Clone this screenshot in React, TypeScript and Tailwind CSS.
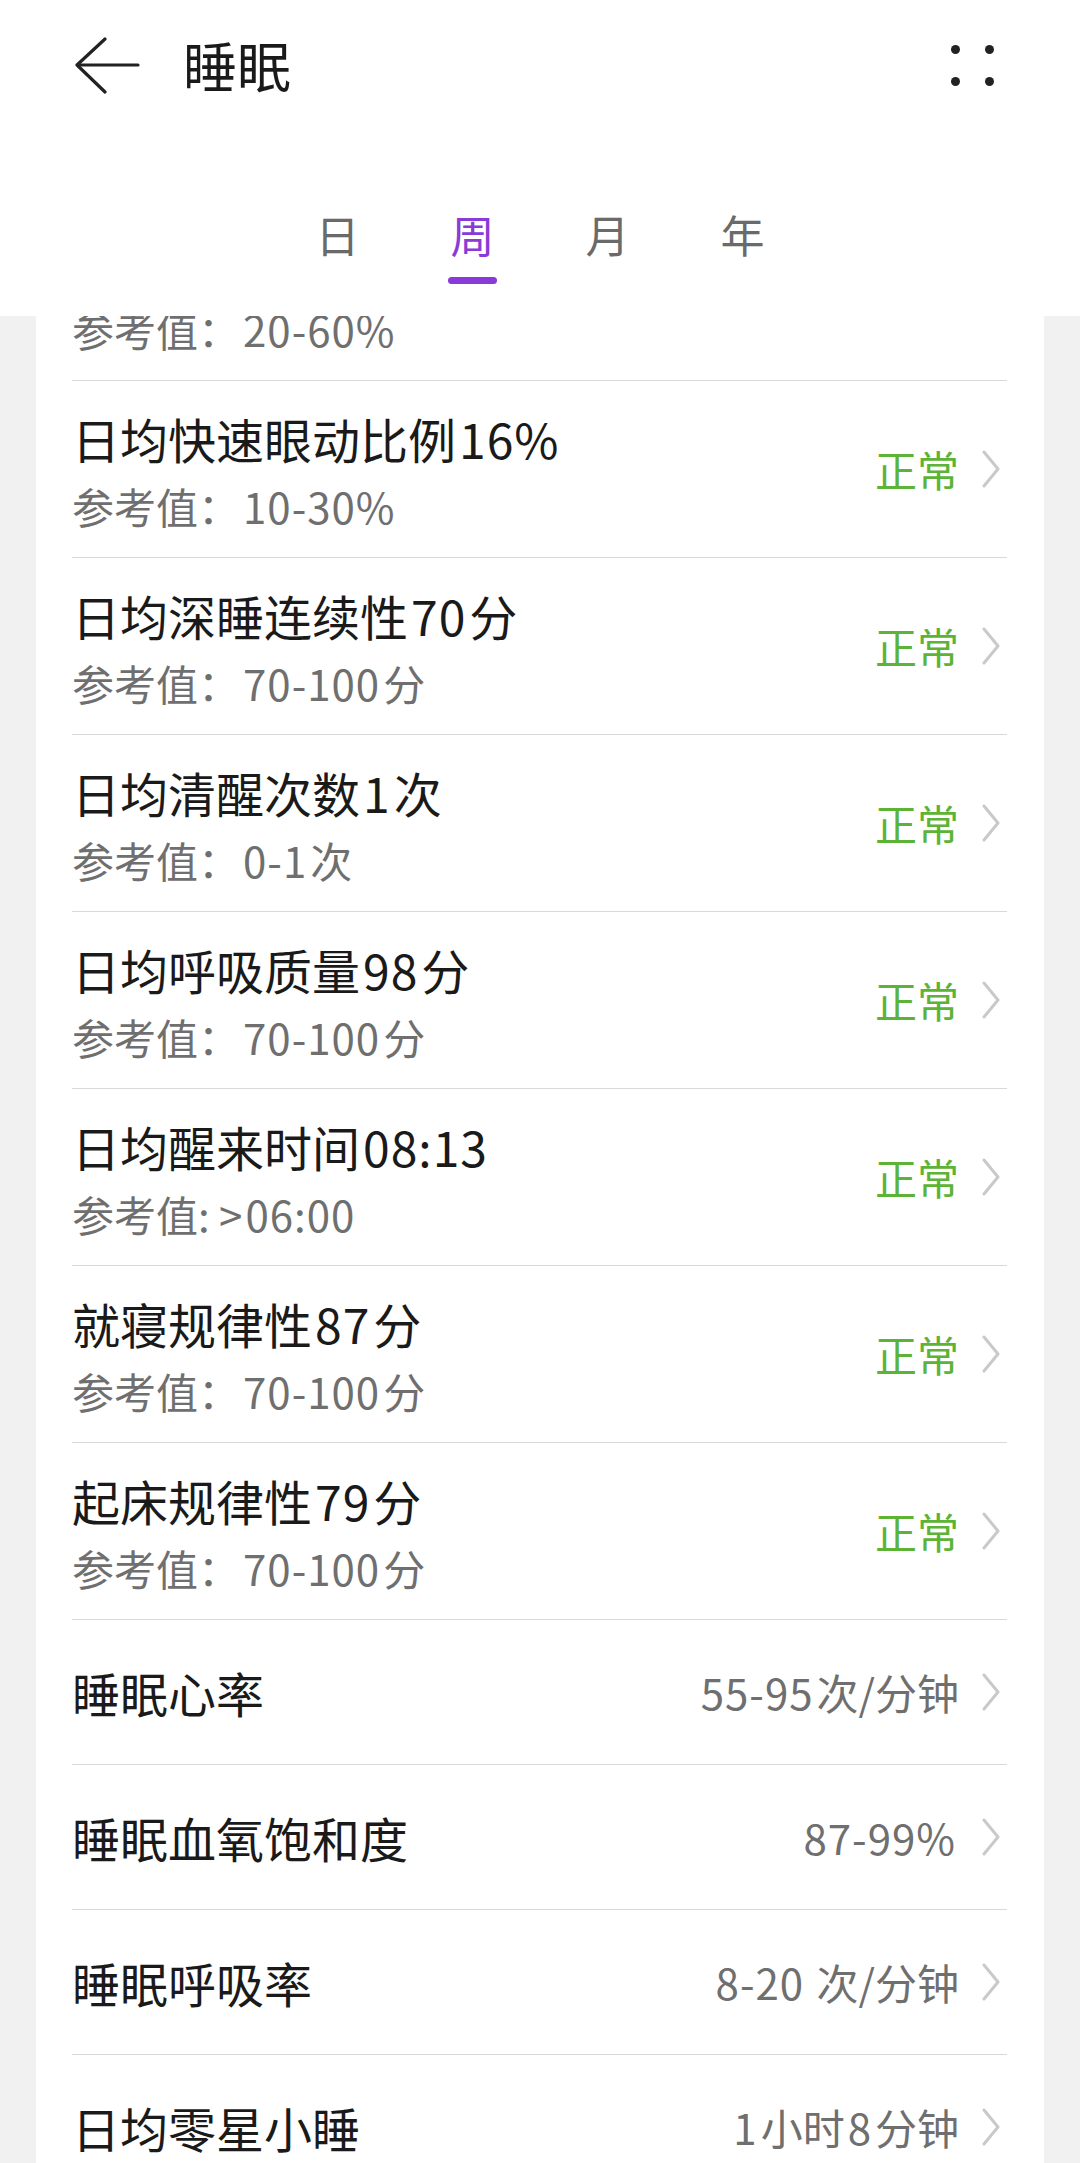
import React from "react";

const FONT = { fontFamily: '"Noto Sans CJK SC", "Noto Sans", sans-serif' };

function Spaced({ text }: { text: string }) {
  const parts = text.split(/([0-9][0-9:.\-%]*)/);
  return (
    <>
      {parts.map((p, i) =>
        /^[0-9]/.test(p) ? (
          <span key={i} className="mx-[3px] tracking-[1px]">{p}</span>
        ) : (
          <span key={i}>{p}</span>
        )
      )}
    </>
  );
}

function Chevron() {
  return (
    <svg width="20" height="38" viewBox="0 0 20 38" className="ml-[22px] shrink-0">
      <polyline points="3,2 17,19 3,36" fill="none" stroke="#c9c9c9" strokeWidth="3" strokeLinecap="round" strokeLinejoin="round" />
    </svg>
  );
}

type TwoRow = { title: string; ref: string };

const twoRows: TwoRow[] = [
  { title: "日均快速眼动比例16%", ref: "参考值：10-30%" },
  { title: "日均深睡连续性70分", ref: "参考值：70-100分" },
  { title: "日均清醒次数1次", ref: "参考值：0-1次" },
  { title: "日均呼吸质量98分", ref: "参考值：70-100分" },
  { title: "日均醒来时间08:13", ref: "参考值: >06:00" },
  { title: "就寝规律性87分", ref: "参考值：70-100分" },
  { title: "起床规律性79分", ref: "参考值：70-100分" },
];

const oneRows = [
  { title: "睡眠心率", value: "55-95次/分钟" },
  { title: "睡眠血氧饱和度", value: "87-99%" },
  { title: "睡眠呼吸率", value: "8-20 次/分钟" },
  { title: "日均零星小睡", value: "1小时8分钟" },
];

function TwoLineRow({ title, refText, status, className = "" }: { title: string; refText: string; status: boolean; className?: string }) {
  return (
    <div className={"flex items-center justify-between border-b border-[#d9d9d9] h-[177px] " + className}>
      <div className="flex flex-col pt-[1px]">
        <div className="text-[48px] leading-[60px] text-[#1a1a1a]"><Spaced text={title} /></div>
        <div className="mt-[13px] text-[42px] leading-[50px] text-[#6f6f6f]"><Spaced text={refText} /></div>
      </div>
      {status && (
        <div className="flex items-center mr-[6px]">
          <span className="text-[42px] leading-[50px] text-[#5db336]">正常</span>
          <Chevron />
        </div>
      )}
    </div>
  );
}

export default function App() {
  return (
    <div className="w-[1080px] h-[2163px] overflow-hidden bg-[#f1f1f1] flex flex-col" style={FONT}>
      {/* Header */}
      <div className="bg-white h-[316px] shrink-0 flex flex-col relative z-10">
        <div className="h-[130px] flex items-center">
          <svg width="66" height="59" viewBox="0 0 66 59" className="ml-[75px] shrink-0">
            <polyline points="30,3 2,29 30,56" fill="none" stroke="#222222" strokeWidth="3.2" strokeLinecap="round" strokeLinejoin="round" />
            <line x1="3" y1="29" x2="63" y2="29" stroke="#222222" strokeWidth="3.2" strokeLinecap="round" />
          </svg>
          <span className="ml-[42px] text-[54px] leading-none text-[#1a1a1a]">睡眠</span>
          <div className="ml-auto mr-[86px] grid grid-cols-2 gap-x-[25px] gap-y-[23px]">
            <span className="w-[9px] h-[9px] rounded-full bg-[#222]" />
            <span className="w-[9px] h-[9px] rounded-full bg-[#222]" />
            <span className="w-[9px] h-[9px] rounded-full bg-[#222]" />
            <span className="w-[9px] h-[9px] rounded-full bg-[#222]" />
          </div>
        </div>
        <div className="flex justify-center pt-[79px]">
          {["日", "周", "月", "年"].map((t) => (
            <div key={t} className="w-[135px] flex flex-col items-center">
              <span className={"text-[44px] leading-[50px] " + (t === "周" ? "text-[#8a3ad8]" : "text-[#6a6a6a]")}>{t}</span>
              {t === "周" ? (
                <span className="mt-[18px] w-[49px] h-[7px] rounded-full bg-[#8a3ad8]" />
              ) : (
                <span className="mt-[18px] h-[7px]" />
              )}
            </div>
          ))}
        </div>
      </div>

      {/* Card */}
      <div className="flex-1 overflow-hidden">
        <div className="mx-[36px] bg-white pl-[36px] pr-[37px]">
          <TwoLineRow title="日均浅睡比例" refText="参考值：20-60%" status={false} className="mt-[-112px]" />
          {twoRows.map((r) => (
            <TwoLineRow key={r.title} title={r.title} refText={r.ref} status={true} />
          ))}
          {oneRows.map((r) => (
            <div key={r.title} className="flex items-center justify-between border-b border-[#d9d9d9] h-[145px]">
              <span className="text-[48px] leading-[60px] text-[#1a1a1a]">{r.title}</span>
              <div className="flex items-center mr-[6px]">
                <span className="text-[42px] leading-[50px] text-[#6f6f6f]"><Spaced text={r.value} /></span>
                <Chevron />
              </div>
            </div>
          ))}
        </div>
      </div>
    </div>
  );
}
